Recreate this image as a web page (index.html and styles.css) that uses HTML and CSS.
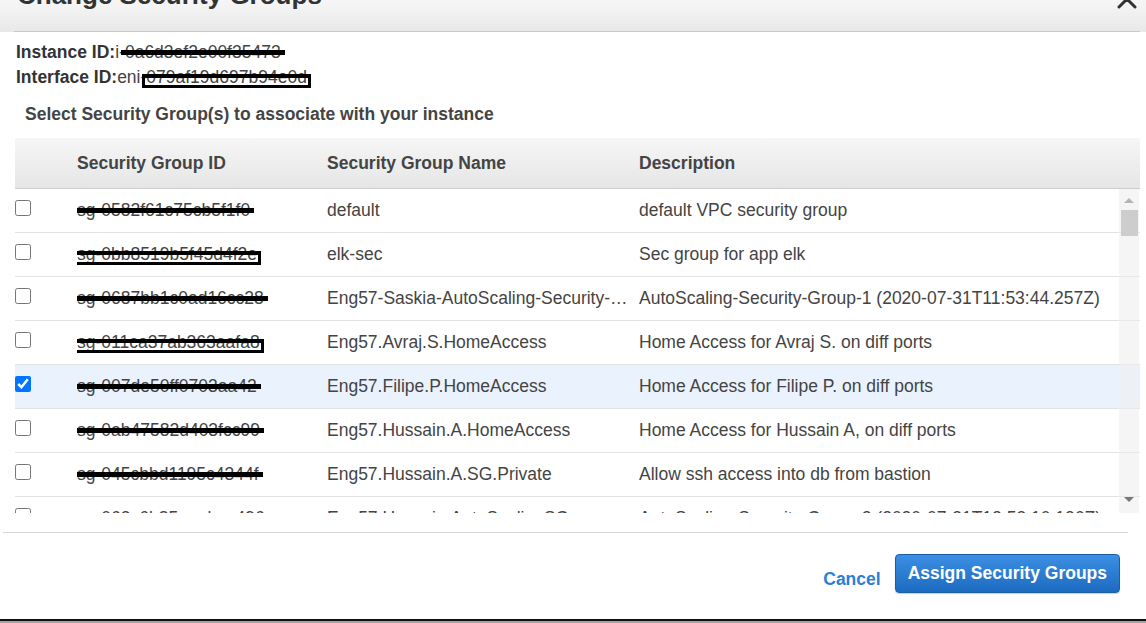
FILE: index.html
```html
<!DOCTYPE html>
<html lang="en">
<head>
<meta charset="utf-8">
<title>Change Security Groups</title>
<link rel="stylesheet" href="styles.css">
</head>
<body>
<div class="dialog">
  <header class="dlg-head">
    <h1 class="dlg-title">Change Security Groups</h1>
    <button class="close" aria-label="Close">
      <svg width="22" height="22" viewBox="0 0 22 22"><path d="M3 3 L19 19 M19 3 L3 19" stroke="#333" stroke-width="3" stroke-linecap="round" fill="none"/></svg>
    </button>
  </header>

  <div class="ids">
    <div class="id-line"><span class="lbl">Instance ID:</span>i-<span class="red">0a6d3ef2e00f35473</span></div>
    <div class="id-line"><span class="lbl">Interface ID:</span>eni-<span class="red box">079af19d697b94e0d</span></div>
  </div>

  <p class="prompt">Select Security Group(s) to associate with your instance</p>

  <div class="sg-table">
    <div class="row thead">
      <div class="cell"></div>
      <div class="cell">Security Group ID</div>
      <div class="cell">Security Group Name</div>
      <div class="cell">Description</div>
    </div>
    <div class="tbody-wrap">
      <div class="tbody">
        <div class="row">
          <div class="cell chk-cell"><input type="checkbox" class="chk"></div>
          <div class="cell"><span class="red">sg-0582f61c75cb5f1f0</span></div>
          <div class="cell name">default</div>
          <div class="cell">default VPC security group</div>
        </div>
        <div class="row">
          <div class="cell chk-cell"><input type="checkbox" class="chk"></div>
          <div class="cell"><span class="red box">sg-0bb8519b5f45d4f2e</span></div>
          <div class="cell name">elk-sec</div>
          <div class="cell">Sec group for app elk</div>
        </div>
        <div class="row">
          <div class="cell chk-cell"><input type="checkbox" class="chk"></div>
          <div class="cell"><span class="red">sg-0687bb1c0ad16cc28</span></div>
          <div class="cell name">Eng57-Saskia-AutoScaling-Security-Group-1</div>
          <div class="cell">AutoScaling-Security-Group-1 (2020-07-31T11:53:44.257Z)</div>
        </div>
        <div class="row">
          <div class="cell chk-cell"><input type="checkbox" class="chk"></div>
          <div class="cell"><span class="red box">sg-011ca37ab363aafa8</span></div>
          <div class="cell name">Eng57.Avraj.S.HomeAccess</div>
          <div class="cell">Home Access for Avraj S. on diff ports</div>
        </div>
        <div class="row selected">
          <div class="cell chk-cell"><input type="checkbox" class="chk" checked></div>
          <div class="cell"><span class="red">sg-007de50ff0703aa42</span></div>
          <div class="cell name">Eng57.Filipe.P.HomeAccess</div>
          <div class="cell">Home Access for Filipe P. on diff ports</div>
        </div>
        <div class="row">
          <div class="cell chk-cell"><input type="checkbox" class="chk"></div>
          <div class="cell"><span class="red">sg-0ab47582d403fcc99</span></div>
          <div class="cell name">Eng57.Hussain.A.HomeAccess</div>
          <div class="cell">Home Access for Hussain A, on diff ports</div>
        </div>
        <div class="row">
          <div class="cell chk-cell"><input type="checkbox" class="chk"></div>
          <div class="cell"><span class="red">sg-045cbbd1195c4344f</span></div>
          <div class="cell name">Eng57.Hussain.A.SG.Private</div>
          <div class="cell">Allow ssh access into db from bastion</div>
        </div>
        <div class="row">
          <div class="cell chk-cell"><input type="checkbox" class="chk"></div>
          <div class="cell">sg-063c6b85aeebce496</div>
          <div class="cell name">Eng57.Hussain.AutoScalingSG</div>
          <div class="cell">AutoScaling-Security-Group-2 (2020-07-31T12:53:10.136Z)</div>
        </div>
      </div>
      <div class="scrollbar" aria-hidden="true">
        <span class="arrow up"></span>
        <span class="thumb"></span>
        <span class="arrow down"></span>
      </div>
    </div>
  </div>

  <footer class="dlg-foot">
    <a class="cancel" href="#">Cancel</a>
    <button class="primary">Assign Security Groups</button>
  </footer>
</div>
</body>
</html>
```

FILE: styles.css
```css
* { box-sizing: border-box; }

html {
  background: #a3a3a3;
  height: 100%;
}

body {
  margin: 0;
  font-family: "Liberation Sans", Arial, sans-serif;
  font-size: 17.5px;
  color: #444;
  overflow: hidden;
}

.dialog {
  height: 621px;
  background: #fff;
  border-bottom: 2px solid #111;
  display: flex;
  flex-direction: column;
}

/* header */
.dlg-head {
  position: relative;
  height: 32px;
  flex: none;
  background: linear-gradient(#f6f6f6, #e8e8e8);
}
.dlg-head::after {
  content: "";
  position: absolute;
  left: 14px;
  right: 6px;
  bottom: 0;
  height: 1px;
  background: #c9c9c9;
}
.dlg-title {
  margin: -20px 0 0 17px;
  font-size: 26px;
  line-height: 30px;
  font-weight: bold;
  color: #333;
}
.close {
  position: absolute;
  right: 8px;
  top: -12px;
  padding: 0;
  border: 0;
  background: none;
  line-height: 0;
}

/* ids */
.ids {
  padding: 8px 0 0 16px;
}
.id-line {
  line-height: 25px;
  color: #444;
}
.lbl {
  font-weight: bold;
  color: #333;
}

.red {
  position: relative;
}
.red::after {
  content: "";
  position: absolute;
  left: -4px;
  right: -4px;
  top: 50%;
  margin-top: -2px;
  height: 5px;
  background: #000;
}
.red.box::after {
  height: 7px;
  margin-top: -3px;
  background: transparent;
  border: 3px solid #000;
  border-top-width: 4px;
}

.prompt {
  margin: 12px 0 0 25px;
  line-height: 24px;
  font-weight: bold;
  color: #444;
}

/* table */
.sg-table {
  margin: 12px 6px 0 15px;
}
.row {
  display: grid;
  grid-template-columns: 62px 250px 312px 1fr;
  align-items: center;
  height: 44px;
  padding-bottom: 2px;
  border-bottom: 1px solid #e2e2e2;
  white-space: nowrap;
}
.thead {
  height: 51px;
  padding-bottom: 0;
  background: linear-gradient(#f6f6f6, #e6e6e6);
  border-bottom: 1px solid #cfcfcf;
  font-weight: bold;
  color: #444;
}
.cell {
  overflow: hidden;
  line-height: 24px;
}
.chk-cell {
  align-self: start;
  padding-top: 11px;
  overflow: visible;
}
.name {
  text-overflow: ellipsis;
  padding-right: 10px;
}
.selected {
  background: #eaf2fd;
}
.chk {
  display: block;
  width: 16px;
  height: 16px;
  margin: 0;
}

.tbody-wrap {
  position: relative;
  height: 324px;
  overflow: hidden;
}

.scrollbar {
  position: absolute;
  top: 0;
  right: 1px;
  width: 20px;
  height: 100%;
  background: rgba(238, 238, 238, 0.6);
}
.thumb {
  position: absolute;
  left: 2px;
  top: 21px;
  width: 17px;
  height: 26px;
  background: #cdcdcd;
}
.arrow {
  position: absolute;
  left: 5px;
  width: 0;
  height: 0;
  border-left: 5px solid transparent;
  border-right: 5px solid transparent;
}
.arrow.up {
  top: 9px;
  border-bottom: 5px solid #b5b5b5;
}
.arrow.down {
  top: 308px;
  border-top: 5px solid #777;
}

/* footer */
.dlg-foot {
  margin: 19px 18px 0 3px;
  padding: 21px 8px 0 0;
  border-top: 1px solid #d6d6d6;
  display: flex;
  justify-content: flex-end;
  align-items: flex-start;
  gap: 14px;
}
.cancel {
  margin-top: 13px;
  line-height: 24px;
  font-weight: bold;
  color: #2b7fd6;
  text-decoration: none;
}
.primary {
  height: 39px;
  padding: 0 12px;
  font-family: inherit;
  font-size: 17.5px;
  font-weight: bold;
  color: #fff;
  background: linear-gradient(#3c8fe3, #1c6bc1);
  border: 1px solid #1a5ea8;
  border-radius: 4px;
  box-shadow: 0 1px 1px rgba(0, 0, 0, 0.2);
}
```
